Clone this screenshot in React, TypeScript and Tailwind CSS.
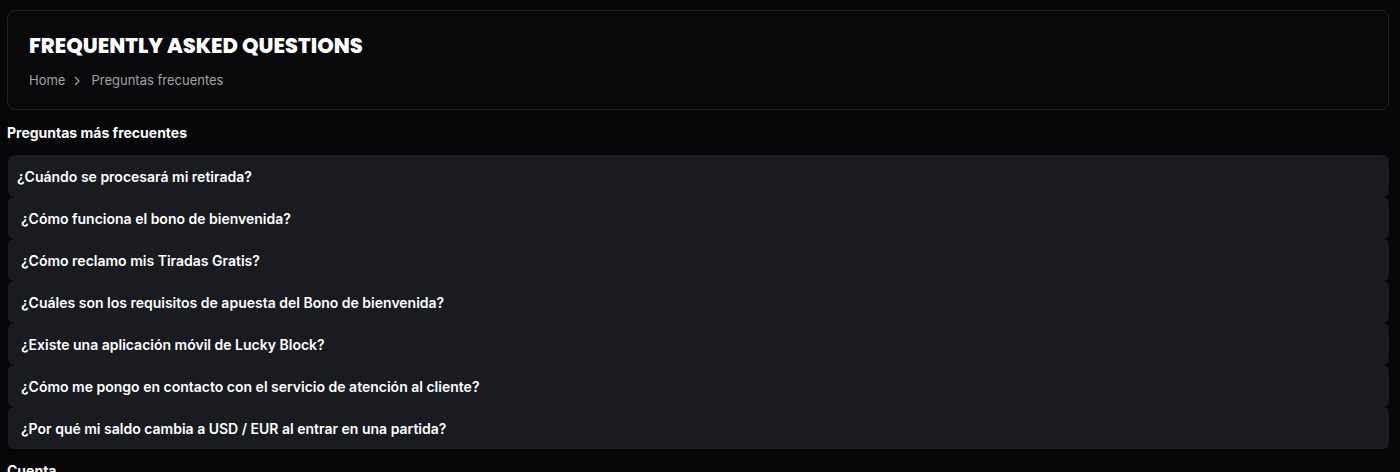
const questions = [
  '¿Cuándo se procesará mi retirada?',
  '¿Cómo funciona el bono de bienvenida?',
  '¿Cómo reclamo mis Tiradas Gratis?',
  '¿Cuáles son los requisitos de apuesta del Bono de bienvenida?',
  '¿Existe una aplicación móvil de Lucky Block?',
  '¿Cómo me pongo en contacto con el servicio de atención al cliente?',
  '¿Por qué mi saldo cambia a USD / EUR al entrar en una partida?',
];

export default function App() {
  return (
    <div className="min-h-screen bg-[#060609] text-white font-['Inter',sans-serif] pl-[7px] pr-[11px] pt-[10px]">
      <div className="h-[100px] rounded-lg border border-[#222328] bg-[#09090c] px-[21px] pt-[22px]">
        <h1 className="text-[21px] font-extrabold uppercase leading-[25px] font-['Poppins','Inter',sans-serif]">
          Frequently Asked Questions
        </h1>
        <div className="mt-[13px] flex items-center text-[13px] text-[#a2a2a6]">
          <span>Home</span>
          <svg className="ml-[6px] mr-[8px] h-[12px] w-[12px]" viewBox="0 0 24 24" fill="none" stroke="currentColor" strokeWidth="2.5" strokeLinecap="round" strokeLinejoin="round">
            <path d="M9 5l7 7-7 7" />
          </svg>
          <span>Preguntas frecuentes</span>
        </div>
      </div>

      <h2 className="mt-[14px] text-[14px] font-bold leading-[18px]">Preguntas más frecuentes</h2>

      <div className="mt-[13px] ml-[1px] flex flex-col">
        {questions.map((q, i) => (
          <button
            key={q}
            className={`flex h-[42px] items-center rounded-md bg-[#1a1b21] text-left text-[14px] font-semibold ${i === 0 ? 'pl-[9px]' : 'pl-[13px]'}`}
          >
            {q}
          </button>
        ))}
      </div>

      <h2 className="mt-[13px] text-[14px] font-bold leading-[18px]">Cuenta</h2>
    </div>
  );
}
